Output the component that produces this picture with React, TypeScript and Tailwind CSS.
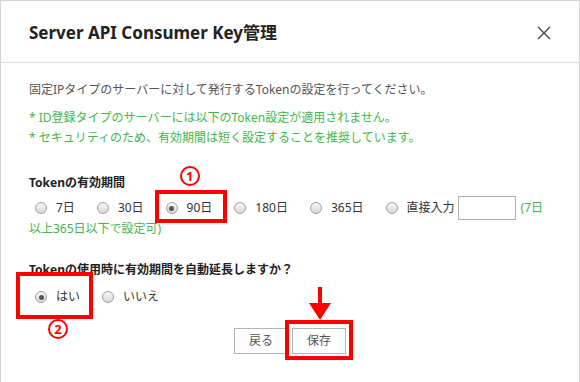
import type { ReactNode } from "react";

function Radio({ checked = false }: { checked?: boolean }) {
	return (
		<span className="flex h-[12px] w-[12px] shrink-0 items-center justify-center rounded-full border border-[#a0a0a0] bg-gradient-to-b from-[#f6f6f6] to-[#d9d9d9]">
			{checked && <span className="h-[5px] w-[5px] rounded-full bg-[#555]" />}
		</span>
	);
}

function Option({
	label,
	checked,
	children,
}: {
	label: string;
	checked?: boolean;
	children?: ReactNode;
}) {
	return (
		<span className="relative flex h-[24px] items-center gap-[9px]">
			<Radio checked={checked} />
			<span className="text-[#333]">{label}</span>
			{children}
		</span>
	);
}

function Marker({ n }: { n: string }) {
	return (
		<span className="flex h-[20px] w-[20px] items-center justify-center rounded-full border-2 border-[#ff0000] text-[13px] font-bold leading-none text-[#ff0000]">
			{n}
		</span>
	);
}

export default function App() {
	return (
		<div className="relative h-[382px] w-[580px] overflow-hidden border-x border-t border-[#d4d4d4] bg-white font-['Noto_Sans','Noto_Sans_CJK_JP',sans-serif] text-[12px]">
			<div className="flex h-[62px] items-center justify-between border-b border-[#dcdcdc] px-[28px] pt-[2px]">
				<h1 className="text-[17px] font-bold text-[#222]">
					Server API Consumer Key管理
				</h1>
				<svg width="14" height="14" viewBox="0 0 14 14" className="text-[#444]">
					<path
						d="M1 1 L13 13 M13 1 L1 13"
						stroke="currentColor"
						strokeWidth="1.4"
						fill="none"
					/>
				</svg>
			</div>

			<div className="px-[28px] pt-[18px]">
				<p className="leading-[18px] text-[#555]">
					固定IPタイプのサーバーに対して発行するTokenの設定を行ってください。
				</p>
				<div className="mt-[9px] leading-[20px] text-[#43b649]">
					<p>* ID登録タイプのサーバーには以下のToken設定が適用されません。</p>
					<p>* セキュリティのため、有効期間は短く設定することを推奨しています。</p>
				</div>

				<h2 className="mt-[26px] font-bold leading-[18px] text-[#222]">
					Tokenの有効期間
				</h2>
				<div className="mt-[4px] flex items-center gap-[22px] pl-[6px]">
					<Option label="7日" />
					<Option label="30日" />
					<Option label="90日" checked>
						<span className="absolute -left-[11px] -right-[15px] -top-[6px] -bottom-[3px] border-4 border-[#ff0000]" />
						<span className="absolute -top-[30px] left-[14px]">
							<Marker n="1" />
						</span>
					</Option>
					<Option label="180日" />
					<Option label="365日" />
					<span className="flex h-[24px] items-center">
						<span className="flex items-center gap-[9px]">
							<Radio />
							<span className="text-[#333]">直接入力</span>
						</span>
						<input
							type="text"
							className="ml-[3px] h-[24px] w-[58px] border border-[#b0b0b0] bg-white outline-none"
						/>
						<span className="ml-[5px] text-[#43b649]">(7日</span>
					</span>
				</div>
				<p className="leading-[18px] text-[#43b649]">以上365日以下で設定可)</p>

				<h2 className="mt-[23px] font-bold leading-[18px] text-[#222]">
					Tokenの使用時に有効期間を自動延長しますか？
				</h2>
				<div className="mt-[8px] flex h-[20px] items-center gap-[22px] pl-[6px]">
					<span className="relative flex items-center gap-[9px]">
						<Radio checked />
						<span className="text-[#333]">はい</span>
						<span className="absolute -left-[19px] -right-[13px] -top-[16px] -bottom-[13px] border-4 border-[#ff0000]" />
						<span className="absolute left-[13px] top-[31px]">
							<Marker n="2" />
						</span>
					</span>
					<Option label="いいえ" />
				</div>

				<div className="mt-[21px] flex justify-center gap-[4px]">
					<button className="h-[26px] w-[54px] border border-[#b4b4b4] bg-white text-[12px] text-[#555]">
						戻る
					</button>
					<span className="relative">
						<button className="h-[26px] w-[54px] border border-[#b4b4b4] bg-white text-[12px] text-[#555]">
							保存
						</button>
						<span className="absolute -left-[7px] -right-[7px] -top-[8px] -bottom-[6px] border-4 border-[#ff0000]" />
						<svg
							width="24"
							height="33"
							viewBox="0 0 24 33"
							className="absolute -top-[41px] left-[16px]"
						>
							<rect x="10" y="0" width="4" height="18" fill="#ff0000" />
							<polygon points="1,16 23,16 12,33" fill="#ff0000" />
						</svg>
					</span>
				</div>
			</div>
		</div>
	);
}
